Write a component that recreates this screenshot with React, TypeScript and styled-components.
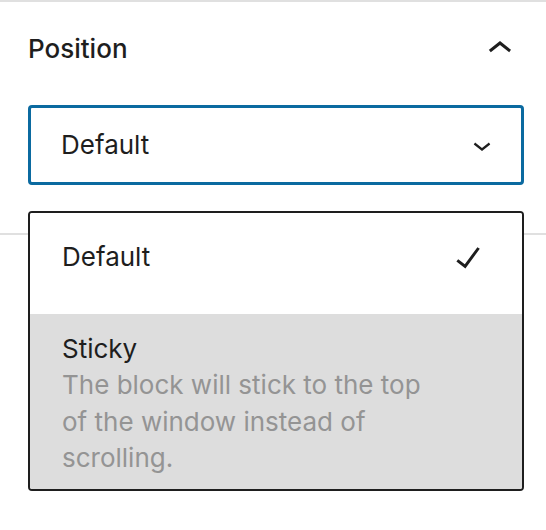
import React from "react";
import styled, { createGlobalStyle } from "styled-components";

const GlobalStyle = createGlobalStyle`
  html, body {
    margin: 0;
    padding: 0;
    background: #ffffff;
  }
  body {
    min-height: 100vh;
    font-family: Inter, "Noto Sans", "Liberation Sans", sans-serif;
    color: #1e1e1e;
    -webkit-font-smoothing: antialiased;
  }
  #root {
    min-height: 530px;
  }
`;

interface OptionItem {
  key: string;
  name: string;
  hint?: string;
}

const options: OptionItem[] = [
  { key: "default", name: "Default" },
  {
    key: "sticky",
    name: "Sticky",
    hint: "The block will stick to the top of the window instead of scrolling.",
  },
];

const ChevronUp = () => (
  <svg width="48" height="48" viewBox="0 0 24 24" aria-hidden="true">
    <path d="M6.5 12.4L12 8l5.5 4.4-.9 1.2L12 10l-4.6 3.6-1-1.2z" fill="#1e1e1e" />
  </svg>
);

const ChevronDown = () => (
  <svg width="36" height="36" viewBox="0 0 24 24" aria-hidden="true">
    <path d="M17.5 11.6L12 16l-5.5-4.4.9-1.2L12 14l4.6-3.6z" fill="#1e1e1e" />
  </svg>
);

const Check = () => (
  <svg width="48" height="48" viewBox="0 0 24 24" aria-hidden="true">
    <path d="M16.7 7.1l-6.3 8.5-3.3-2.5-.9 1.2 4.5 3.4L17.9 7.9z" fill="#1e1e1e" />
  </svg>
);

const App: React.FC = () => {
  const selected = "default";

  return (
    <>
      <GlobalStyle />
      <Panel>
        <Header>
          <Title>Position</Title>
          <IconButton aria-label="Collapse">
            <ChevronUp />
          </IconButton>
        </Header>
        <SelectWrap>
          <Select>
            <SelectValue>Default</SelectValue>
            <ChevronDown />
          </Select>
          <Menu role="listbox">
            {options.map((opt) => (
              <Option key={opt.key} $selected={opt.key === selected} role="option">
                <OptionText>
                  <OptionName>{opt.name}</OptionName>
                  {opt.hint && <OptionHint>{opt.hint}</OptionHint>}
                </OptionText>
                {opt.key === selected && (
                  <CheckSlot>
                    <Check />
                  </CheckSlot>
                )}
              </Option>
            ))}
          </Menu>
        </SelectWrap>
      </Panel>
    </>
  );
};

export default App;

const Panel = styled.section`
  border-top: 2px solid #e0e0e0;
  border-bottom: 2px solid #e0e0e0;
  padding: 0 22px 48px 28px;
`;

const Header = styled.div`
  height: 94px;
  display: flex;
  align-items: center;
  justify-content: space-between;
`;

const Title = styled.h2`
  margin: 0;
  font-size: 26px;
  font-weight: 500;
  line-height: 36px;
  color: #1e1e1e;
`;

const IconButton = styled.button`
  display: flex;
  padding: 0;
  border: 0;
  background: none;
  cursor: pointer;
`;

const SelectWrap = styled.div`
  position: relative;
  margin-top: 9px;
`;

const Select = styled.div`
  box-sizing: border-box;
  height: 80px;
  display: flex;
  align-items: center;
  justify-content: space-between;
  padding: 0 21px 0 30px;
  border: 3px solid #0b6aa0;
  border-radius: 4px;
  background: #fff;
`;

const SelectValue = styled.span`
  font-size: 26px;
  line-height: 36px;
`;

const Menu = styled.div`
  position: absolute;
  top: calc(100% + 26px);
  left: 0;
  right: 0;
  z-index: 2;
  box-sizing: border-box;
  height: 280px;
  border: 2px solid #1e1e1e;
  border-radius: 4px;
  background: #fff;
  overflow: hidden;
`;

const Option = styled.div<{ $selected?: boolean }>`
  display: flex;
  align-items: flex-start;
  justify-content: space-between;
  padding: ${({ $selected }) => ($selected ? "26px 32px 38px" : "17px 32px 14px")};
  background: ${({ $selected }) => ($selected ? "#ffffff" : "#dddddd")};
`;

const OptionText = styled.div`
  display: flex;
  flex-direction: column;
`;

const OptionName = styled.span`
  font-size: 26px;
  line-height: 36.5px;
  color: #1e1e1e;
`;

const OptionHint = styled.span`
  max-width: 370px;
  font-size: 26px;
  line-height: 36.5px;
  color: #949494;
`;

const CheckSlot = styled.span`
  display: flex;
  height: 36px;
  align-items: center;
  margin-right: -2px;
`;
